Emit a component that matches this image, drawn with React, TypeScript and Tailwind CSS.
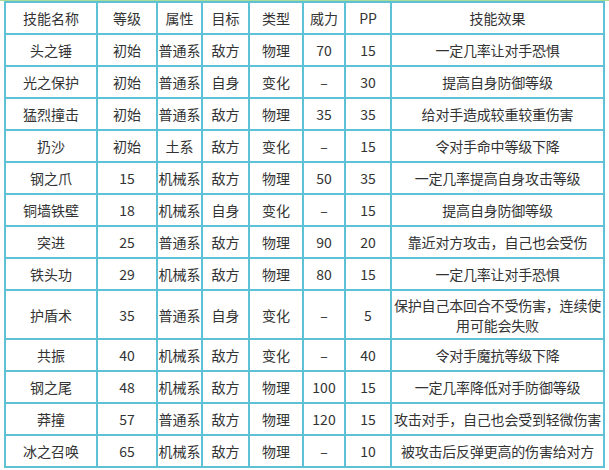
const rows = [
  ["头之锤", "初始", "普通系", "敌方", "物理", "70", "15", "一定几率让对手恐惧"],
  ["光之保护", "初始", "普通系", "自身", "变化", "–", "30", "提高自身防御等级"],
  ["猛烈撞击", "初始", "普通系", "敌方", "物理", "35", "35", "给对手造成较重较重伤害"],
  ["扔沙", "初始", "土系", "敌方", "变化", "–", "15", "令对手命中等级下降"],
  ["钢之爪", "15", "机械系", "敌方", "物理", "50", "35", "一定几率提高自身攻击等级"],
  ["铜墙铁壁", "18", "机械系", "自身", "变化", "–", "15", "提高自身防御等级"],
  ["突进", "25", "普通系", "敌方", "物理", "90", "20", "靠近对方攻击，自己也会受伤"],
  ["铁头功", "29", "机械系", "敌方", "物理", "80", "15", "一定几率让对手恐惧"],
  ["护盾术", "35", "普通系", "自身", "变化", "–", "5", "保护自己本回合不受伤害，连续使用可能会失败"],
  ["共振", "40", "机械系", "敌方", "变化", "–", "40", "令对手魔抗等级下降"],
  ["钢之尾", "48", "机械系", "敌方", "物理", "100", "15", "一定几率降低对手防御等级"],
  ["莽撞", "57", "普通系", "敌方", "物理", "120", "15", "攻击对手，自己也会受到轻微伤害"],
  ["冰之召唤", "65", "机械系", "敌方", "物理", "–", "10", "被攻击后反弹更高的伤害给对方"],
];

const headers = ["技能名称", "等级", "属性", "目标", "类型", "威力", "PP", "技能效果"];
const widths = [92, 60, 45, 47, 54, 42, 46, 213];

export default function App() {
  return (
    <div className="w-[609px] h-[470px] bg-white overflow-hidden">
      <div className="h-px bg-[#a8dc94]" />
      <table
        className="ml-1 w-[601px] table-fixed border-collapse border-2 border-[#5ec1d6] text-[14px] leading-[20px] text-[#333]"
        style={{ fontFamily: '"Noto Sans CJK SC", "Noto Sans", sans-serif' }}
      >
        <colgroup>
          {widths.map((w, i) => (
            <col key={i} style={{ width: w }} />
          ))}
        </colgroup>
        <thead>
          <tr className="h-[32px]">
            {headers.map((h) => (
              <th key={h} className="border-2 border-[#5ec1d6] p-0 text-center font-normal">
                {h}
              </th>
            ))}
          </tr>
        </thead>
        <tbody>
          {rows.map((r) => (
            <tr key={r[0]} className={r[0] === "护盾术" ? "h-[49px]" : "h-[32px]"}>
              {r.map((c, i) => (
                <td
                  key={i}
                  className={
                    "border-2 border-[#5ec1d6] p-0 text-center " +
                    (i === 7 ? "px-0 tracking-[-0.2px]" : "")
                  }
                >
                  {c}
                </td>
              ))}
            </tr>
          ))}
        </tbody>
      </table>
    </div>
  );
}
